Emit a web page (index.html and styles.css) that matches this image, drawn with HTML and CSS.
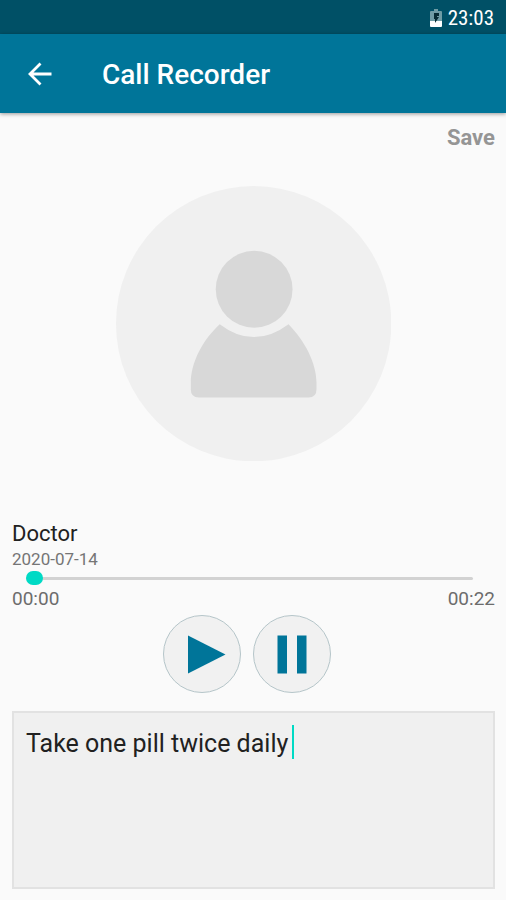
FILE: index.html
```html
<!DOCTYPE html>
<html lang="en">
<head>
<meta charset="utf-8">
<meta name="viewport" content="width=device-width, initial-scale=1">
<title>Call Recorder</title>
<link rel="stylesheet" href="styles.css">
</head>
<body>
<div class="status">
  <svg class="battery" width="12" height="18" viewBox="0 0 12 18" aria-hidden="true">
    <path d="M4 0h4v2h3a1 1 0 0 1 1 1v9H0V3a1 1 0 0 1 1-1h3z" fill="#6f9ca5"/>
    <path d="M0 12h12v5a1 1 0 0 1-1 1H1a1 1 0 0 1-1-1z" fill="#fff"/>
    <path d="M4 4h5v3H7v1h2l-4 6v-4H4z" fill="#062b33"/>
  </svg>
  <span>23:03</span>
</div>
<header class="toolbar">
  <button class="back" type="button" aria-label="Back">
    <svg width="24" height="24" viewBox="0 0 24 24" aria-hidden="true"><path d="M23.500 12H2M12.500 1.500 2 12l10.500 10.500" fill="none" stroke="#fff" stroke-width="2.800"/></svg>
  </button>
  <h1>Call Recorder</h1>
</header>
<main class="content">
  <button class="save" type="button">Save</button>
  <svg class="avatar" viewBox="0 0 276 276" role="img" aria-label="Contact photo">
    <circle cx="138" cy="138" r="138" fill="#f0f0f0"/>
    <circle cx="138.500" cy="103.500" r="38.500" fill="#d8d8d8"/>
    <path d="M104 138.500Q138 164.500 173 138.500C189 155 201 177 201 197v7q0 8-8 8H83q-8 0-8-8v-7C75 177 87 154 104 138.500z" fill="#d8d8d8"/>
  </svg>
  <h2 class="name">Doctor</h2>
  <time class="date" datetime="2020-07-14">2020-07-14</time>
  <input class="seek" type="range" min="0" max="22" value="0" aria-label="Playback position">
  <div class="times"><span>00:00</span><span>00:22</span></div>
  <div class="controls">
    <button class="round" type="button" aria-label="Play">
      <svg width="76" height="76" viewBox="0 0 76 76" aria-hidden="true"><path d="M24 19.500 61.500 38.500 24 57.500z" fill="#007599"/></svg>
    </button>
    <button class="round" type="button" aria-label="Pause">
      <svg width="76" height="76" viewBox="0 0 76 76" aria-hidden="true"><path d="M23.500 19.500h9.500v38h-9.500zM43 19.500h9.500v38H43z" fill="#007599"/></svg>
    </button>
  </div>
  <div class="note">
    <textarea aria-label="Note">Take one pill twice daily</textarea>
    <span class="caret"></span>
  </div>
</main>
</body>
</html>
```
FILE: styles.css
```css
* {
  box-sizing: border-box;
}

body {
  margin: 0;
  min-height: 100vh;
  display: flex;
  flex-direction: column;
  background: #fafafa;
  color: #212121;
  font-family: Roboto, "Liberation Sans", sans-serif;
}

button {
  padding: 0;
  border: 0;
  background: none;
  font: inherit;
}

svg {
  display: block;
}

.status {
  display: flex;
  align-items: center;
  justify-content: flex-end;
  gap: 6px;
  height: 34px;
  padding: 2px 12px 0;
  background: #005066;
  color: #fff;
  font-family: "Roboto Condensed", Roboto, sans-serif;
  font-size: 21px;
}

.toolbar {
  display: flex;
  align-items: center;
  gap: 50px;
  height: 79px;
  padding: 1px 28px 0;
  background: #007599;
  color: #fff;
  box-shadow: 0 1px 4px rgba(0, 0, 0, 0.4);
}

.toolbar h1 {
  margin: 0;
  font-size: 28px;
  font-weight: 500;
}

.content {
  flex: 1;
  display: flex;
  flex-direction: column;
  padding: 12px 11px 11px 12px;
}

.save {
  align-self: flex-end;
  color: #959595;
  font-size: 22px;
  font-weight: 700;
  line-height: 26px;
}

.avatar {
  align-self: center;
  width: 57%;
  margin: 35px 0 60px;
}

.name {
  margin: 0;
  font-size: 22px;
  font-weight: 400;
  line-height: 26px;
}

.date {
  color: #757575;
  font-size: 17px;
  line-height: 24px;
}

.seek {
  appearance: none;
  height: 14px;
  margin: 0 22px 0 14px;
  background: transparent;
}

.seek::-webkit-slider-runnable-track {
  height: 3px;
  background: #d2d2d2;
  border-radius: 2px;
}

.seek::-webkit-slider-thumb {
  appearance: none;
  width: 17px;
  height: 14px;
  margin-top: -6px;
  border-radius: 7px;
  background: #00dac5;
}

.times {
  display: flex;
  justify-content: space-between;
  color: #6c6c6c;
  font-size: 19px;
  line-height: 28px;
}

.controls {
  display: flex;
  justify-content: center;
  gap: 12px;
  margin: 2px 14px 18px 0;
}

.round {
  width: 78px;
  height: 78px;
  border: 1px solid #b5c5c9;
  border-radius: 50%;
  background: #f1f1f1;
}

.note {
  position: relative;
  flex: 1;
  display: flex;
}

.note textarea {
  flex: 1;
  min-height: 120px;
  padding: 16px 12px;
  border: 2px solid #e2e2e2;
  border-radius: 0;
  background: #f0f0f0;
  color: #212121;
  font: 25px/30px Roboto, "Liberation Sans", sans-serif;
  resize: none;
  outline: 0;
}

.caret {
  position: absolute;
  top: 14px;
  left: 280px;
  width: 2px;
  height: 34px;
  background: #00dac5;
}
```
